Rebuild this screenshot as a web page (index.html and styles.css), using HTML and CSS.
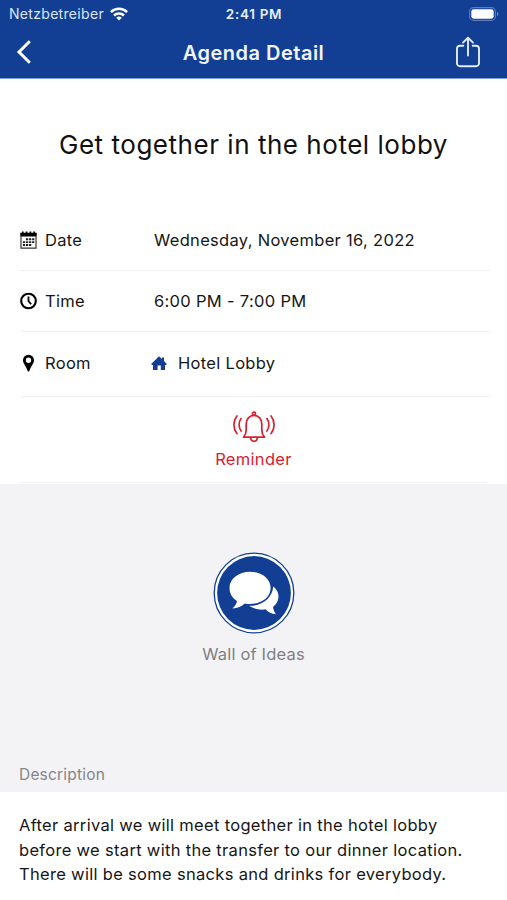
FILE: index.html
```html
<!DOCTYPE html>
<html lang="en">
<head>
  <meta charset="UTF-8">
  <meta name="viewport" content="width=device-width, initial-scale=1.0">
  <title>Agenda Detail</title>
  <link rel="stylesheet" href="styles.css">
</head>
<body>
  <header>
    <div class="status-bar">
      <div class="carrier">
        <span>Netzbetreiber</span>
        <svg class="wifi" viewBox="0 0 18 14" fill="none" stroke="#fff" stroke-width="2.5">
          <path d="M0.9 5.1a11.6 11.6 0 0 1 16.2 0"/>
          <path d="M4 8.5a7.2 7.2 0 0 1 10 0"/>
          <path d="M9 13.6L6.2 10.8a4 4 0 0 1 5.6 0z" fill="#fff" stroke="none"/>
        </svg>
      </div>
      <span class="clock">2:41 PM</span>
      <svg class="battery" viewBox="0 0 30 14">
        <rect x="0.6" y="0.6" width="25.8" height="12.8" rx="4" fill="none" stroke="#5d7dbb" stroke-width="1.1"/>
        <rect x="2.3" y="2.3" width="22.4" height="9.4" rx="2.4" fill="#fff"/>
        <path d="M28 4.8v4.4c1.9-.8 1.9-3.6 0-4.4z" fill="#6f8cc4"/>
      </svg>
    </div>
    <nav>
      <svg class="back" viewBox="0 0 16 24" fill="none" stroke="#fff" stroke-width="3">
        <path d="M13.8 1.2L3 12l10.8 10.8"/>
      </svg>
      <h1>Agenda Detail</h1>
      <svg class="share" viewBox="0 0 26 32" fill="none" stroke="#e4ecfb" stroke-width="1.9" stroke-linecap="round" stroke-linejoin="round">
        <path d="M8.3 9.8H5a3 3 0 0 0-3 3v14.4a3 3 0 0 0 3 3h16a3 3 0 0 0 3-3V12.8a3 3 0 0 0-3-3h-3.3"/>
        <path d="M13 19.6V2M8 6.6L13 1.7l5 4.9"/>
      </svg>
    </nav>
  </header>

  <main>
    <h2>Get together in the hotel lobby</h2>

    <div class="details">
      <div class="row date">
        <svg class="icon" viewBox="0 0 16 17">
          <path d="M.2 1.6h1.6V.4h1.6v1.2h2V.4H7v1.2h2V.4h1.6v1.2h2V.4h1.6v1.2h1.6v3.6H.2z"/>
          <path d="M.9 5v11.2h14.2V5" fill="none" stroke="#333" stroke-width="1.1"/>
          <path d="M5.6 7.8h8M2.7 10.5h10.9M2.7 13.2h8.4" fill="none" stroke="#222" stroke-width="1.8" stroke-dasharray="2.1 .8"/>
        </svg>
        <span class="label">Date</span>
        <span>Wednesday, November 16, 2022</span>
      </div>
      <div class="row time">
        <svg class="icon" viewBox="0 0 16 17" fill="none" stroke="#000">
          <circle cx="8" cy="8.5" r="6.9" stroke-width="2"/>
          <path d="M8 4.3v4.3l2.5 3" stroke-width="1.7"/>
        </svg>
        <span class="label">Time</span>
        <span>6:00 PM - 7:00 PM</span>
      </div>
      <div class="row room">
        <svg class="icon" viewBox="0 0 16 17">
          <path fill-rule="evenodd" d="M8 .6a5.2 5.2 0 0 0-5.2 5.2c0 2.3 1.4 3.9 2.6 6.2.8 1.5 1.4 2.9 1.8 4.1.3.7 1.3.7 1.6 0 .4-1.2 1-2.6 1.8-4.1 1.2-2.3 2.6-3.9 2.6-6.2A5.2 5.2 0 0 0 8 .6zM8 3.4a2.5 2.5 0 1 1 0 5 2.5 2.5 0 0 1 0-5z"/>
        </svg>
        <span class="label">Room</span>
        <svg class="house" viewBox="0 0 16 15" fill="#123f94">
          <path d="M8 .3l3 2.8V1.5h2v3.6l2.8 2.8-.7 1.2H14v4.8H9.8V9.6H6.6v4.3H2V9.1H.8L.2 7.9z"/>
        </svg>
        <span>Hotel Lobby</span>
      </div>
    </div>

    <div class="reminder">
      <svg class="bell" viewBox="0 0 42 32" fill="none" stroke="#d8202f" stroke-width="1.7" stroke-linecap="round" stroke-linejoin="round">
        <path d="M10.5 26.2c1.9-2 2.7-4.1 2.7-7.2v-6c0-5 3.2-8.6 7.8-8.6s7.8 3.6 7.8 8.6v6c0 3.1.8 5.2 2.7 7.2z"/>
        <circle cx="21" cy="2.8" r="1.6"/>
        <path d="M17.7 26.8c.3 4.7 6.3 4.7 6.6 0"/>
        <path d="M8.1 7.6c-2.7 3.6-2.7 8.8 0 12.4M3.9 5c-4 5.3-4 12.3 0 17.6M33.9 7.6c2.7 3.6 2.7 8.8 0 12.4M38.1 5c4 5.3 4 12.3 0 17.6"/>
      </svg>
      <span>Reminder</span>
    </div>
  </main>

  <section class="wall">
    <svg class="wall-icon" viewBox="0 0 82 82">
      <circle cx="41" cy="41" r="39.8" fill="#fff" stroke="#123f94" stroke-width="1.3"/>
      <circle cx="41" cy="41" r="36.9" fill="#123f94"/>
      <path fill="#fff" d="M37.3 19.7c-11.9 0-20.8 7-20.8 16.2 0 5.7 2.8 10 7.5 13-.5 2.8-2 5.2-4.6 7.6 5.3-.3 9.2-2 12.3-5.1 1.7.4 3.5.6 5.3.6 11.5 0 20.6-7 20.6-16.1S49 19.7 37.3 19.7z"/>
      <path fill="#fff" d="M60.2 34.5c3.3 2.5 5.3 6 5.3 9.8 0 4.6-2.2 8.2-5.5 10.7.4 2.6 1.2 4.9 3 7.2-4.500-.3-7.900-2.100-10.400-4.900-5.900 1.100-12.300-.6-16.300-3.500 12.600.3 23.200-7.700 23.900-19.300z"/>
    </svg>
    <span>Wall of Ideas</span>
  </section>

  <h3>Description</h3>
  <p class="description">After arrival we will meet together in the hotel lobby<br>
    before we start with the transfer to our dinner location.<br>
    There will be some snacks and drinks for everybody.</p>
</body>
</html>
```
FILE: styles.css
```css
* {
  box-sizing: border-box;
}
body {
  font-family: Inter, Roboto, sans-serif;
  background-color: #fff;
  margin: 0;
  color: #161616;
  font-size: 16.5px;
  letter-spacing: 0.31px;
  height: 900px;
  overflow: hidden;
}
svg {
  display: block;
  flex-shrink: 0;
}
header {
  background-color: #123f94;
  color: #fff;
  height: 79px;
  border-bottom: 1px solid #7f9dd6;
}
.status-bar {
  display: grid;
  grid-template-columns: 1fr auto 1fr;
  align-items: center;
  height: 27px;
  padding: 0 8px 0 9px;
}
.carrier {
  display: flex;
  align-items: center;
  gap: 6px;
  font-size: 14px;
  color: #dce5f5;
}
.wifi {
  width: 18px;
  height: 14px;
}
.clock {
  font-size: 13.5px;
  font-weight: 600;
  letter-spacing: 0.7px;
  color: #e9effa;
}
.battery {
  width: 30px;
  height: 14px;
  justify-self: end;
}
nav {
  display: grid;
  grid-template-columns: 1fr auto 1fr;
  align-items: center;
  height: 50px;
  padding: 0 26px 0 16px;
}
.back {
  width: 16px;
  height: 24px;
}
h1 {
  margin: 2px 0 0 10px;
  font-size: 20px;
  font-weight: 600;
  letter-spacing: 0.5px;
  color: #f1f5fd;
}
.share {
  width: 26px;
  height: 32px;
  justify-self: end;
}
main {
  height: 405px;
}
h2 {
  margin: 0;
  height: 131px;
  line-height: 131px;
  text-align: center;
  font-size: 26px;
  font-weight: 400;
  letter-spacing: 0.53px;
  color: #111;
}
.details {
  padding: 0 17px 0 20px;
}
.row {
  display: flex;
  align-items: center;
  border-bottom: 1px solid #f0f0f0;
}
.date {
  height: 61px;
}
.time {
  height: 61px;
}
.room {
  height: 65px;
  padding-bottom: 2px;
}
.icon {
  width: 17px;
  height: 18px;
  margin-right: 8px;
}
.label {
  width: 109px;
}
.house {
  width: 16px;
  height: 15px;
  margin: 0 11px 0 -3px;
}
.reminder {
  display: flex;
  flex-direction: column;
  align-items: center;
  gap: 6px;
  height: 86px;
  margin: 0 20px;
  padding-top: 14px;
  border-bottom: 1px solid #f3f3f6;
  color: #d8202f;
}
.bell {
  width: 42px;
  height: 32px;
}
.wall {
  display: flex;
  flex-direction: column;
  align-items: center;
  gap: 10px;
  height: 273px;
  padding-top: 68px;
  background-color: #f3f3f6;
  color: #808084;
}
.wall span {
  letter-spacing: 0.18px;
}
.wall-icon {
  width: 82px;
  height: 82px;
}
h3 {
  margin: 0;
  height: 35px;
  line-height: 35px;
  padding-left: 19px;
  background-color: #f3f3f6;
  color: #858589;
  font-size: 15.5px;
  font-weight: 400;
  letter-spacing: 0.2px;
}
.description {
  margin: 0;
  padding: 21px 19px;
  line-height: 24.5px;
}
```
